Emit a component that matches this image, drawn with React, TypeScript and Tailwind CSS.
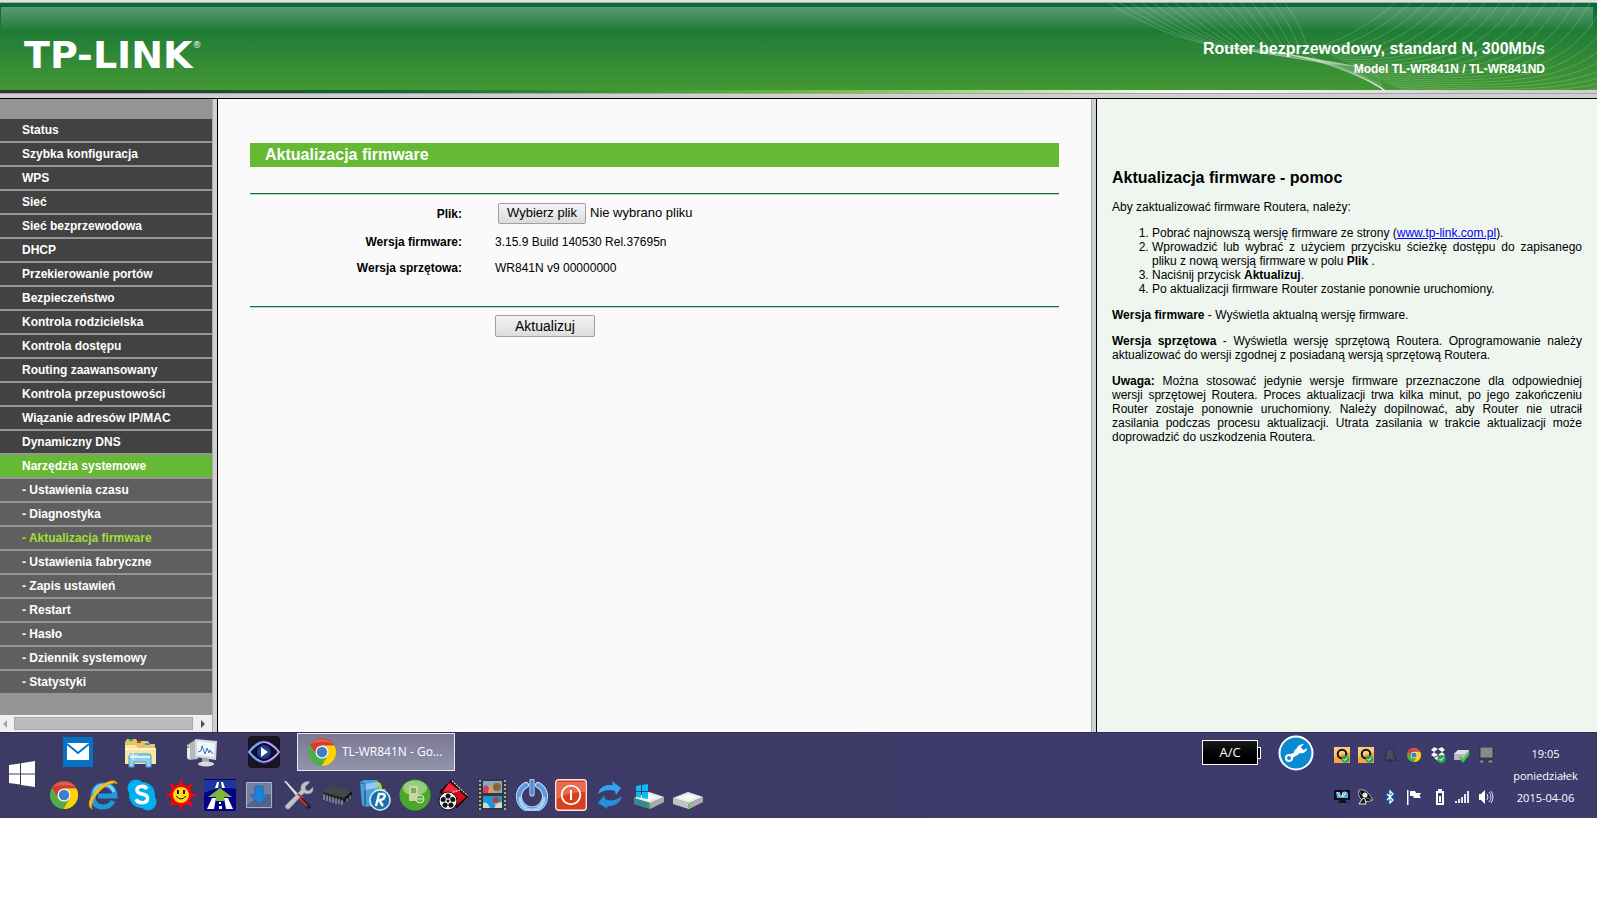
import { useRef, useState } from "react";
import type { ReactNode } from "react";

const menu = [
  "Status",
  "Szybka konfiguracja",
  "WPS",
  "Sieć",
  "Sieć bezprzewodowa",
  "DHCP",
  "Przekierowanie portów",
  "Bezpieczeństwo",
  "Kontrola rodzicielska",
  "Kontrola dostępu",
  "Routing zaawansowany",
  "Kontrola przepustowości",
  "Wiązanie adresów IP/MAC",
  "Dynamiczny DNS",
  "Narzędzia systemowe",
];

const submenu = [
  "Ustawienia czasu",
  "Diagnostyka",
  "Aktualizacja firmware",
  "Ustawienia fabryczne",
  "Zapis ustawień",
  "Restart",
  "Hasło",
  "Dziennik systemowy",
  "Statystyki",
];

export default function App() {
  return (
    <div className="bg-white pr-[3px] font-['Liberation_Sans',Arial,sans-serif] text-xs text-black">
      <Header />
      <div className="grid grid-cols-[218px_1fr_506px] items-stretch">
        <Sidebar />
        <UpgradeForm />
        <HelpPanel />
      </div>
      <Taskbar />
    </div>
  );
}

/* ──── Header ──── */
function Header() {
  return (
    <header>
      <div className="h-[3px] border-b border-[#a9adac] bg-[#dfe0e4]" />
      <div className="relative flex h-[87px] items-start justify-between overflow-hidden bg-linear-to-b from-[#0a6b37] from-5% via-[#1e7c37] via-30% to-[#439833] pl-6 pr-[52px]">
        <div className="absolute left-px right-1 top-1 h-6 bg-linear-to-b from-[#569c74] to-[#1e7a37]" />
        <Waves />
        <div className="relative flex items-start pt-8 font-['DejaVu_Sans',Verdana,sans-serif] text-white">
          <span className="text-[38px]/10 font-bold">TP-LINK</span>
          <span className="pt-1 text-[9px]/3">®</span>
        </div>
        <div className="relative pt-[34px] text-right font-bold text-white">
          <div className="text-base/6">Router bezprzewodowy, standard N, 300Mb/s</div>
          <div className="text-xs/4">Model TL-WR841N / TL-WR841ND</div>
        </div>
      </div>
      <div className="h-[3px] bg-[linear-gradient(to_right,#333_5%,#0c6b3a_25%,#66b92f_50%,#fff_75%,#cfcfcf_92%)]" />
      <div className="h-[6px] border-b border-t border-b-black border-t-[#a5a5a5] bg-[#d0d0d0]" />
    </header>
  );
}

function Waves() {
  const left = Array.from({ length: 17 }, (_, i) => {
    const x = 12 + i * 11;
    return `M${x} 0 C${x + 50 - i} ${30 + i} ${x + 90 - i * 5} ${44 + i} ${150 + i * 6} ${46 + i} S${260 + i} ${68 + i} 292 90`;
  });
  const right = Array.from({ length: 22 }, (_, i) => {
    const x = 298 + i * 15;
    return `M${x} 0 C${x - 32} ${28 + i * 2} ${x - 66} ${42 + i * 3} ${218 + i * 4} ${44 + i * 2}`;
  });
  return (
    <svg className="absolute right-0 top-0 h-[87px] w-[500px]" viewBox="0 0 500 87" fill="none" stroke="#fff" strokeOpacity=".18">
      {[...left, ...right].map((d) => (
        <path key={d} d={d} />
      ))}
    </svg>
  );
}

/* ──── Left menu ──── */
function Sidebar() {
  const row = "block h-[22px] pl-[22px] text-xs/[22px] font-bold";
  return (
    <div className="flex border-r border-black bg-[#d0d0d0] pr-1">
      <nav className="flex w-[213px] flex-col border-r border-[#aaa] bg-[#959595] pt-5">
        <ul className="space-y-[2px]">
          {menu.map((name, i) => (
            <li key={name}>
              <a href="#menu" className={`${row} text-white ${i === menu.length - 1 ? "bg-[#65b933]" : "bg-[#424242]"}`}>
                {name}
              </a>
            </li>
          ))}
          {submenu.map((name) => (
            <li key={name}>
              <a href="#menu" className={`${row} bg-[#5f5f5f] ${name === "Aktualizacja firmware" ? "text-[#a2df35]" : "text-white"}`}>
                - {name}
              </a>
            </li>
          ))}
        </ul>
        <div className="mt-[22px] flex h-[17px] items-center justify-between bg-[#f0f0f0] px-[3px]">
          <svg className="h-2 w-1" viewBox="0 0 4 8" fill="#a3a3a3"><path d="M4 0v8L0 4z" /></svg>
          <div className="ml-[7px] mr-2 h-[13px] flex-1 border border-[#a8a8a8] bg-[#bcbcbc]" />
          <svg className="mr-1 h-2 w-1" viewBox="0 0 4 8" fill="#505050"><path d="M0 0v8l4-4z" /></svg>
        </div>
      </nav>
    </div>
  );
}

/* ──── Firmware form ──── */
function UpgradeForm() {
  const fileRef = useRef<HTMLInputElement>(null);
  const [fileName, setFileName] = useState("Nie wybrano pliku");
  const button = "border border-[#a0a0a0] bg-linear-to-b from-[#f4f4f4] to-[#dcdcdc] rounded-[2px]";

  return (
    <main className="bg-[#fafafa] px-8 pt-11">
      <h1 className="h-6 bg-[#66b933] pl-[15px] text-base/6 font-bold text-white">Aktualizacja firmware</h1>
      <form onSubmit={(e) => e.preventDefault()}>
        <div className="mt-[26px] h-[2px] border-t border-[#0f7038] bg-[#b5d8c2]" />
        <div className="grid grid-cols-[212px_1fr] gap-x-[33px] pt-[6px]">
          <label htmlFor="firmware-file" className="text-right leading-[26px] font-bold">Plik:</label>
          <div className="flex items-center pb-[2px] pl-[3px] text-[13px]">
            <input
              ref={fileRef}
              id="firmware-file"
              type="file"
              className="hidden"
              onChange={(e) => setFileName(e.target.files?.[0]?.name || "Nie wybrano pliku")}
            />
            <button type="button" className={`${button} h-[21px] w-[88px]`} onClick={() => fileRef.current?.click()}>
              Wybierz plik
            </button>
            <span className="pl-1">{fileName}</span>
          </div>
          <div className="pt-px text-right leading-7 font-bold">Wersja firmware:</div>
          <div className="pt-px leading-7">3.15.9 Build 140530 Rel.37695n</div>
          <div className="text-right leading-6 font-bold">Wersja sprzętowa:</div>
          <div className="leading-6">WR841N v9 00000000</div>
        </div>
        <div className="mt-[26px] h-[2px] border-t border-[#0f7038] bg-[#b5d8c2]" />
        <button type="submit" className={`${button} ml-[245px] mt-[7px] h-[22px] w-[100px] text-sm/5`}>Aktualizuj</button>
      </form>
    </main>
  );
}

/* ──── Help ──── */
function HelpPanel() {
  return (
    <div className="flex border-l border-[#aaa] bg-[#d0d0d0] pl-1">
      <aside className="flex-1 space-y-3 border-l border-black bg-[#eff6f0] px-[15px] pt-[69px] text-justify text-xs/[14px]">
        <h2 className="text-base/5 font-bold">Aktualizacja firmware - pomoc</h2>
        <p>Aby zaktualizować firmware Routera, należy:</p>
        <ol className="list-decimal pl-10">
          <li>
            Pobrać najnowszą wersję firmware ze strony (<a href="#tp-link" className="text-[#0000ee] underline">www.tp-link.com.pl</a>).
          </li>
          <li>Wprowadzić lub wybrać z użyciem przycisku ścieżkę dostępu do zapisanego pliku z nową wersją firmware w polu <b>Plik</b> .</li>
          <li>Naciśnij przycisk <b>Aktualizuj</b>.</li>
          <li>Po aktualizacji firmware Router zostanie ponownie uruchomiony.</li>
        </ol>
        <p><b>Wersja firmware</b> - Wyświetla aktualną wersję firmware.</p>
        <p>
          <b>Wersja sprzętowa</b> - Wyświetla wersję sprzętową Routera. Oprogramowanie należy aktualizować do wersji zgodnej z posiadaną wersją sprzętową Routera.
        </p>
        <p>
          <b>Uwaga:</b> Można stosować jedynie wersje firmware przeznaczone dla odpowiedniej wersji&nbsp;sprzętowej Routera. Proces aktualizacji trwa kilka minut, po jego zakończeniu Router zostaje ponownie uruchomiony. Należy dopilnować, aby Router nie utracił zasilania podczas procesu aktualizacji. Utrata zasilania w trakcie aktualizacji może doprowadzić do uszkodzenia Routera.
        </p>
      </aside>
    </div>
  );
}

/* ──── Taskbar ──── */
function Taskbar() {
  return (
    <footer className="flex h-[86px] justify-between border-t border-[#2f2e55] bg-linear-to-r from-[#3d3a64] to-[#3d3b6c] font-['Open_Sans','Noto_Sans',sans-serif] text-white">
      <div className="flex">
        <button aria-label="Start" className="flex w-11 items-center justify-center pb-1">
          <svg className="h-[26px] w-[26px]" viewBox="0 0 26 26" fill="#fff">
            <path d="M0 4l11-1.600v10H0zM12 2.200L26 0v12.400H12zM0 13.600h11v10L0 22zM12 13.600h14V26l-14-2z" />
          </svg>
        </button>
        <div>
          <div className="flex h-[38px] items-center pl-[3px]">
            {pinned.map((icon) => (
              <button key={icon.name} aria-label={icon.name} className="flex w-[62px] justify-center"><Icon>{icon.art}</Icon></button>
            ))}
            <button className="ml-[2px] flex h-[38px] w-[158px] items-center gap-1 border border-[#e8e8f0] bg-linear-to-b from-[#7b7994] to-[#9392ab] pl-2 text-xs">
              <Icon><Chrome /></Icon>
              TL-WR841N - Go...
            </button>
          </div>
          <div className="flex h-[47px] items-center">
            {launchers.map((icon) => (
              <button key={icon.name} aria-label={icon.name} className="flex w-[39px] justify-center"><Icon>{icon.art}</Icon></button>
            ))}
          </div>
        </div>
      </div>
      <div className="flex">
        <div className="mt-[7px] flex h-[25px] items-center">
          <div className="flex h-[25px] w-14 items-center justify-center border border-white bg-linear-to-b from-[#1c1c1c] to-black text-[13px]">A/C</div>
          <div className="h-3 w-[3px] border border-l-0 border-white bg-black" />
        </div>
        <button aria-label="Serwis" className="ml-[17px] mt-[2px] h-9 w-9">
          <svg viewBox="0 0 36 36">
            <circle cx="18" cy="18" r="16.500" fill="#0a8ad2" stroke="#fff" strokeWidth="2" />
            <path d="M12 22l7-4 3-4" fill="none" stroke="#fff" strokeWidth="4" strokeLinejoin="round" />
            <circle cx="11" cy="23" r="3" fill="#0a8ad2" stroke="#fff" strokeWidth="2" />
            <path d="M19 13c1-3 4-4 7-4l-3 3 1 2 2 1 3-2c0 4-4 6-8 5l-4 1-1-3z" fill="#fff" />
          </svg>
        </button>
        <div className="ml-4 grid w-[168px] grid-cols-7 content-start justify-items-center gap-y-[26px] pt-[14px]">
          {tray.map((icon) => (
            <button key={icon.name} aria-label={icon.name} className="h-4 w-4">
              <svg className="h-4 w-4" viewBox="0 0 16 16">{icon.art}</svg>
            </button>
          ))}
        </div>
        <div className="flex w-[99px] flex-col pr-1 pt-[10px] text-center text-[11px]/[22px]">
          <span>19:05</span>
          <span>poniedziałek</span>
          <span>2015-04-06</span>
        </div>
      </div>
    </footer>
  );
}

function Icon({ children }: { children: ReactNode }) {
  return <svg className="h-8 w-8 shrink-0" viewBox="0 0 32 32">{children}</svg>;
}

function Chrome() {
  return (
    <g transform="translate(16 16)">
      <circle r="14" fill="#4caf47" />
      <path d="M-11.900-7.400A14 14 0 0 1 12.350-6.600H0L-5.700 3.300z" fill="#d93a2f" />
      <path d="M12.350-6.600A14 14 0 0 1-.460 14L5.700 3.300 0-6.600z" fill="#fdd008" />
      <circle r="6.600" fill="#f4f4f4" />
      <circle r="5.200" fill="#3f7fc8" />
      <path d="M-11-8A14 14 0 0 1 11-8 18 10 0 0 0-11-8z" fill="#fff" opacity=".18" />
    </g>
  );
}

/* grey external disk, shared by the two drive launchers */
function Drive({ face }: { face: string }) {
  return (
    <g>
      <path d="M1 19l15-6 15 5v5l-14 7-16-5z" fill="#77797d" />
      <path d="M1 19l15-6 15 5-14 6z" fill="#e6e7e8" />
      <path d="M6 19l10-4 9 3-9 4z" fill="#f8f8f8" />
      <path d="M1 19l16 5v6L1 25z" fill={face} />
      <path d="M17 24l14-6v5l-14 7z" fill="#a9abae" />
      <path d="M16 25l2-1v4l-2 1z" fill="#48d33c" />
    </g>
  );
}

const pinned = [
  {
    name: "Poczta",
    art: (
      <g>
        <path d="M1 1h30v30H1z" fill="#0572c6" />
        <path d="M5 7h22v17H5z" fill="#fff" />
        <path d="M5 8l11 9 11-9" fill="none" stroke="#0572c6" strokeWidth="2" />
      </g>
    ),
  },
  {
    name: "Eksplorator",
    art: (
      <g>
        <path d="M1 6l2-3h9l2 3h2l1-1h7l2 3h5v20H1z" fill="#e4c466" />
        <path d="M5 3h4v2H5z" fill="#19b53a" />
        <path d="M13 5h4v2h-4z" fill="#d8392d" />
        <path d="M21 7h5v2h-5z" fill="#2f9be0" />
        <path d="M1 9h11l2 3h18v16H1z" fill="#f8e7a2" />
        <path d="M1 12h31v2H1z" fill="#fff4c8" />
        <path d="M5 31V20q0-2 2-2h18q2 0 2 2v11h-5v-5H10v5z" fill="#8fd0ee" stroke="#4d9cc9" />
        <path d="M6 21h20" stroke="#d9f2fb" strokeWidth="2" />
        <path d="M9 14v10M4 19h10" stroke="#fff" opacity=".8" />
      </g>
    ),
  },
  {
    name: "Monitor systemu",
    art: (
      <g>
        <path d="M1 9l8-5 3 1v18l-9 1-2-2z" fill="#b5b8bb" />
        <path d="M1 9l3 1v13l-3-1z" fill="#e8e8e8" />
        <path d="M1 10h2v2H1z" fill="#35cf2c" />
        <path d="M9 3l22 2-1 19-21-3z" fill="#d6d9dc" />
        <path d="M11 5l18 2-1 14-17-2z" fill="#eef6fa" />
        <path d="M12 16l3-1 1-5 3 8 2-6 2 5 1-3 3 4" fill="none" stroke="#3277a8" />
        <path d="M16 22l7 1v4h-7z" fill="#a4a7aa" />
        <ellipse cx="20" cy="28" rx="8" ry="2.500" fill="#dadada" />
      </g>
    ),
  },
  {
    name: "Odtwarzacz",
    art: (
      <g>
        <rect width="32" height="32" rx="4" fill="#17151d" />
        <path d="M0 16q16-23 32 0-16 23-32 0z" fill="#8c49dd" opacity=".7" />
        <path d="M1 16q15-19 30 0-15 19-30 0z" fill="#11142d" stroke="#b7a4ff" strokeWidth="2" />
        <path d="M1 16Q8 7 16 6.500M1 16q7 9 15 9.500" fill="none" stroke="#6fa5ff" strokeWidth="2" />
        <circle cx="16" cy="16" r="8" fill="#273a91" stroke="#080b24" strokeWidth="2" />
        <path d="M13 11l7 5-7 5z" fill="#fff" />
      </g>
    ),
  },
];

const launchers = [
  { name: "Chrome", art: <Chrome /> },
  {
    name: "Internet Explorer",
    art: (
      <g fill="none">
        <path d="M26 22q-3 6-10 6-10 0-10-11Q7 6 17 6q10 0 11 11H11" stroke="#1c98dc" strokeWidth="5" />
        <path d="M7 14q2-8 10-8 8 0 10 7" stroke="#7ad4f8" strokeWidth="3" />
        <path d="M5 30C-3 26 8 8 21 3q8-3 9 2-1-2-4-1C15 6 2 22 5 30z" fill="#f7c41f" stroke="#e5a912" />
      </g>
    ),
  },
  {
    name: "Skype",
    art: (
      <g>
        <circle cx="10" cy="9" r="8.500" fill="#00aff0" />
        <circle cx="22" cy="23" r="8.500" fill="#00aff0" />
        <circle cx="16" cy="16" r="13" fill="#00aff0" />
        <path d="M21 10q-2-3-6-2.500-4 .5-4 3.500 0 3 5 4 5.500 1 5.500 4.500 0 4-5 4.200-5 0-6.500-3.500" fill="none" stroke="#fff" strokeWidth="3.600" />
      </g>
    ),
  },
  {
    name: "Słońce",
    art: (
      <g>
        {[0, 45, 90, 135, 180, 225, 270, 315].map((a) => (
          <g key={a} transform={`rotate(${a} 16 16)`}>
            <path d="M13 7l3-5 3 5z" fill="#f00" />
            <circle cx="16" cy="2.500" r="1.500" fill="#f00" />
          </g>
        ))}
        <circle cx="16" cy="16" r="10.500" fill="#f00" />
        <circle cx="16" cy="16" r="8" fill="#ffd91c" />
        <path d="M13 11v4M19 11v4" stroke="#201800" strokeWidth="2" />
        <path d="M11 17q5 6 10 0" fill="none" stroke="#201800" />
      </g>
    ),
  },
  {
    name: "AutoMapa",
    art: (
      <g>
        <rect width="32" height="32" rx="1" fill="#020286" />
        <path d="M0 1h32v9Q16 7 0 14z" fill="#3358a8" opacity=".6" />
        <path d="M13 3h2l-1 6h-3zM17 3h2l2 6h-3z" fill="#fff" />
        <path d="M16 9l12 9h-8v4h-8v-4H4z" fill="#79b83a" />
        <path d="M8 19h4l-2 11H3zM20 19h4l5 11h-7zM15 23h2v2h-2zM15 27h3v3h-3z" fill="#fff" />
      </g>
    ),
  },
  {
    name: "Pobieranie",
    art: (
      <g>
        <path d="M2 2h28v28H2z" fill="#56628a" stroke="#252944" />
        <path d="M3.500 3.500h25v25h-25z" fill="none" stroke="#a6b0c8" />
        <path d="M4 4h24v11Q15 17 4 26z" fill="#8993ae" opacity=".6" />
        <path d="M12 7h8v9h5l-9 9-9-9h5z" fill="#1b82dc" stroke="#2a66ac" />
      </g>
    ),
  },
  {
    name: "Narzędzia",
    art: (
      <g>
        <path d="M2 2l2 0 14 15-2 2z" fill="#e2e2e2" />
        <path d="M18 17l10 9q2 3-1 4-2 0-4-3l-7-8z" fill="#22222a" />
        <path d="M17 19l8 8" stroke="#d22d2d" strokeWidth="2" />
        <path d="M3 27L19 11q-1-6 4-8 3-1 5 0l-5 5 1 3 3 1 4-4q1 7-6 7l-3-1L7 30q-3 1-4-3z" fill="#c1c4c7" stroke="#85888c" strokeWidth=".7" />
        <path d="M16 15l5 4" stroke="#c42f33" strokeWidth="2" />
      </g>
    ),
  },
  {
    name: "Układ",
    art: (
      <g>
        <path d="M2 13l9-6 20 5-8 8z" fill="#46474b" />
        <path d="M2 13l21 6v4L2 16z" fill="#222327" />
        <path d="M23 19l8-7v4l-8 7z" fill="#111216" />
        <path d="M3 15v6M6 16v6M9 17v6M12 18v6M15 19v6M18 20v5M21 21v5" stroke="#b6b7bb" />
        <path d="M26 19v4M29 16v4" stroke="#85868c" />
      </g>
    ),
  },
  {
    name: "Revo Uninstaller",
    art: (
      <g>
        <path d="M0 3l4-2h13l2 3v22l-14 2-3-2z" fill="#4b9fdf" />
        <path d="M4 5l14-2v6L5 11z" fill="#8ccaf3" />
        <path d="M5 12v14M0 4l5 1v23" fill="none" stroke="#235f9c" />
        <path d="M14 3q8-2 8 7h4l-6 6-5-6h4q0-5-5-7z" fill="#a5dc3b" />
        <circle cx="20" cy="21" r="10" fill="#1572a8" stroke="#cfeaf5" strokeWidth="1.500" />
        <path d="M16 27l3-12h4q3 1 1 4-1 2-5 2l4 6" fill="none" stroke="#fff" strokeWidth="2.400" />
      </g>
    ),
  },
  {
    name: "Zielony pakiet",
    art: (
      <g>
        <circle cx="16" cy="16" r="15.500" fill="#4aa72a" />
        <ellipse cx="16" cy="9" rx="12" ry="7.500" fill="#c7eab2" opacity=".6" />
        <path d="M10 7h9v15h-9z" fill="#cbd5a6" />
        <path d="M12 9h5v5h-5z" fill="#7fae5b" />
        <circle cx="21" cy="20" r="4" fill="#6eac50" stroke="#dfeccd" />
        <path d="M18 20h6" stroke="#dfeccd" />
      </g>
    ),
  },
  {
    name: "Film",
    art: (
      <g>
        <path d="M13 1l18 16-12 12L1 13z" fill="#080808" />
        <path d="M12 3l16 15-10 9L4 13z" fill="#d50c17" />
        <path d="M11 4l9 7-8 5-6-4z" fill="#fb2933" />
        <path d="M14 2l16 15M9 15l13-4" stroke="#ddd" strokeWidth="1.200" strokeDasharray="2 1" />
        <circle cx="10" cy="22" r="9" fill="#eee" stroke="#111" />
        {[0, 72, 144, 216, 288].map((a) => (
          <circle key={a} cx="10" cy="17" r="2.500" fill="#121212" transform={`rotate(${a} 10 22)`} />
        ))}
        <circle cx="10" cy="22" r="1.400" fill="#121212" />
      </g>
    ),
  },
  {
    name: "Klisza",
    art: (
      <g>
        <path d="M1 0h29v31H1z" fill="#34383b" />
        <path d="M3 1v30M28 1v30" stroke="#a6aaac" strokeWidth="2" strokeDasharray="2 2" />
        <path d="M6 2h19v12H6z" fill="#8aa9c5" />
        <path d="M6 17h19v12H6z" fill="#1f96d8" />
        <path d="M6 9q3-6 6 0v5H6z" fill="#cd3f71" />
        <path d="M12 8q4-4 4 6h-5z" fill="#ef9c39" />
        <circle cx="20" cy="8" r="4" fill="#8a6438" />
        <path d="M6 24q4-2 7 5H6zM20 24l5-1v6h-8z" fill="#c8dcd7" />
        <circle cx="19" cy="21" r="3" fill="#c93830" />
        <path d="M18 24l1 2 2-2" stroke="#f3c24a" fill="none" />
      </g>
    ),
  },
  {
    name: "Wyłącz",
    art: (
      <g fill="none" strokeLinecap="round">
        <path d="M10 6a13 13 0 1 0 12 0" stroke="#dceefd" strokeWidth="6" />
        <path d="M10 6a13 13 0 1 0 12 0" stroke="#5b9be3" strokeWidth="4.500" />
        <path d="M4 19a12 12 0 0 0 24 0" stroke="#a3d3fa" strokeWidth="3" />
        <path d="M16 2v13" stroke="#dceefd" strokeWidth="5" />
        <path d="M16 2v13" stroke="#4b8bd8" strokeWidth="3.500" />
      </g>
    ),
  },
  {
    name: "Zamknij system",
    art: (
      <g>
        <rect x=".7" y=".7" width="30.600" height="30.600" rx="3" fill="#d8411f" stroke="#fbe5de" strokeWidth="1.400" />
        <path d="M2 3h28v10Q15 12 2 20z" fill="#ed7f62" opacity=".7" />
        <circle cx="16" cy="16" r="9.300" fill="none" stroke="#fff" strokeWidth="1.800" />
        <path d="M16 11v10" stroke="#fff" strokeWidth="2" />
      </g>
    ),
  },
  {
    name: "Synchronizacja",
    art: (
      <g fill="#34a4ef">
        <path d="M4 15Q6 6 16 6l3 0-1-4 9 7-5 7-1-4q-9-3-17 3z" />
        <path d="M28 17q-2 9-12 10h-3l1 3-10-6 6-8 1 4q8 4 17-3z" fill="#2590dd" />
      </g>
    ),
  },
  {
    name: "Dysk systemowy",
    art: (
      <g>
        <Drive face="#3f8690" />
        <path d="M3 7l5-1v6H3zM9 6l6-1v7H9zM3 13h5v6l-5-1zM9 13h6v7l-6-1z" fill="#09bdf4" />
      </g>
    ),
  },
  { name: "Dysk", art: <Drive face="#c3c4c6" /> },
];

const orangeSearch = (
  <g>
    <path d="M0 0h16v16H0z" fill="#f7a83c" />
    <path d="M0 0h16v5L0 10z" fill="#fccb83" />
    <circle cx="8" cy="7" r="4.300" fill="none" stroke="#141210" strokeWidth="2" />
    <circle cx="11.500" cy="12" r="3.800" fill="#29a352" />
    <path d="M9.500 12l1.500 1.500 2.500-3" fill="none" stroke="#fff" />
  </g>
);

const tray = [
  { name: "Wyszukiwanie", art: orangeSearch },
  { name: "Indeksowanie", art: orangeSearch },
  {
    name: "Powiadomienia",
    art: <path d="M8 1q4 1 4 6v3l3 3H1l3-3V7q0-5 4-6zM6 14h4l-2 2z" fill="#4c4a63" stroke="#24223d" strokeWidth=".8" />,
  },
  { name: "Chrome", art: <g transform="scale(.5)"><Chrome /></g> },
  {
    name: "Dropbox",
    art: (
      <g>
        <path d="M4 0l4 2-4 3-3-2zM12 0l3 3-3 2-4-3zM4 5l4 3-4 2-3-2zM12 5l3 3-3 2-4-2zM4 11l4-2 4 2-4 3z" fill="#f6f6f6" />
        <circle cx="11.500" cy="12" r="4" fill="#2aa84c" />
        <path d="M9.500 12l1.500 1.500 2.500-3" fill="none" stroke="#fff" />
      </g>
    ),
  },
  {
    name: "Bezpieczne usuwanie",
    art: (
      <g>
        <path d="M0 7l4-4h11v5l-5 5H0z" fill="#b6b7ba" />
        <path d="M0 7l4-4h11l-4 4z" fill="#dedfe0" />
        <path d="M6 10l3 4 6-8" fill="none" stroke="#35c94a" strokeWidth="2.400" />
      </g>
    ),
  },
  {
    name: "Ekrany",
    art: (
      <g fill="#8b8a88" stroke="#24232f" strokeWidth=".8">
        <path d="M2 0h13v11H2zM1 13h5v3H1zM10 13h5v3h-5z" />
      </g>
    ),
  },
  {
    name: "Sieć lokalna",
    art: (
      <g>
        <path d="M0 1h16v10H0z" fill="#0b0e14" />
        <path d="M2 3h4l1 4 3-5 4 2v5H3z" fill="#5ca9df" />
        <path d="M3 3l3 4M9 3l-1 5M12 3l-3 5" stroke="#e3f1fa" />
        <path d="M6 11h5l2 3H4z" fill="#111" />
      </g>
    ),
  },
  {
    name: "Antena",
    art: (
      <g>
        <path d="M1 1q8-2 14 10-8 4-13-2-3-5-1-8z" fill="#111" stroke="#ccc" strokeWidth=".8" />
        <path d="M1 1q1 7 14 10" fill="none" stroke="#777" />
        <path d="M5 9l-4 6h7l-1-5z" stroke="#eee" fill="#171717" />
        <circle cx="7" cy="6" r="2.500" fill="#eee" />
      </g>
    ),
  },
  {
    name: "Bluetooth",
    art: (
      <g>
        <ellipse cx="8" cy="8" rx="5.500" ry="8" fill="#174f8d" />
        <path d="M5 5l6 6-3 3V2l3 3-6 6" fill="none" stroke="#fff" strokeWidth="1.200" />
      </g>
    ),
  },
  {
    name: "Centrum akcji",
    art: <path d="M1 1h1.500v15H1zM4 2h5l1 2h5l-1.500 2.500L15 9H8L7 7H4z" fill="#fff" />,
  },
  {
    name: "Bateria",
    art: (
      <g fill="#fff">
        <path d="M8 0h4v2h2v14H6V2h2zM8 4v10h4V4z" fillRule="evenodd" />
        <path d="M9 7h2v6H9z" />
      </g>
    ),
  },
  {
    name: "Zasięg",
    art: <path d="M1 12h2v2H1zM4 10h2v4H4zM7 8h2v6H7zM10 5h2v9h-2zM13 2h2v12h-2z" fill="#e6e6ee" />,
  },
  {
    name: "Głośność",
    art: (
      <g>
        <path d="M1 5h2l4-4v14l-4-4H1z" fill="#fff" />
        <path d="M9 5q2 3 0 6M11 3q4 5 0 10M13 2q4 6 0 12" fill="none" stroke="#dcdce6" />
      </g>
    ),
  },
];
